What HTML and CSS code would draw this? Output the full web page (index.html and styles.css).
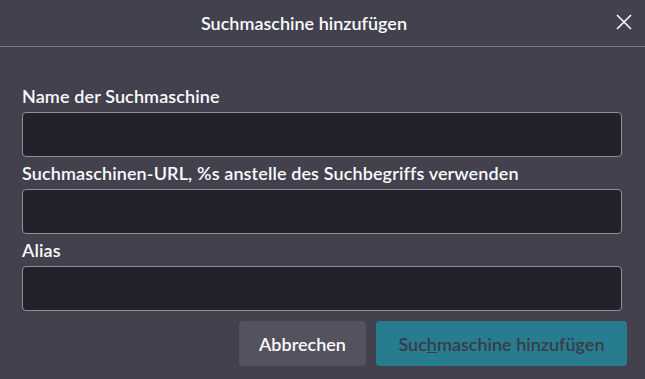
FILE: index.html
```html
<!DOCTYPE html>
<html lang="de">
<head>
    <meta charset="UTF-8">
    <title>Suchmaschine hinzufügen</title>
    <link rel="stylesheet" href="styles.css">
</head>
<body>
    <div class="dialog">
        <div class="dialog-header">
            <h1 class="dialog-title">Suchmaschine hinzufügen</h1>
            <button class="close-btn" aria-label="Schließen">
                <svg width="16" height="16" viewBox="0 0 16 16">
                    <path d="M1 1 L15 15 M15 1 L1 15" stroke="#fbfbfe" stroke-width="1.6" fill="none"/>
                </svg>
            </button>
        </div>

        <form class="dialog-body">
            <label class="field">
                <span class="field-label">Name der Suchmaschine</span>
                <input type="text" class="field-input">
            </label>
            <label class="field">
                <span class="field-label">Suchmaschinen-URL, %s anstelle des Suchbegriffs verwenden</span>
                <input type="text" class="field-input">
            </label>
            <label class="field">
                <span class="field-label">Alias</span>
                <input type="text" class="field-input">
            </label>

            <div class="button-row">
                <button type="button" class="btn btn-secondary">Abbrechen</button>
                <button type="button" class="btn btn-primary" disabled>Suc<u>h</u>maschine hinzufügen</button>
            </div>
        </form>
    </div>
</body>
</html>
```

FILE: styles.css
```css
body {
    margin: 0;
    background-color: #42414d;
    color: #fbfbfe;
    font-family: 'Lato', 'Liberation Sans', sans-serif;
}

.dialog {
    width: 645px;
    height: 379px;
}

.dialog-header {
    height: 46px;
    border-bottom: 1px solid #787783;
    display: flex;
    align-items: center;
}

.dialog-title {
    flex: 1;
    margin: 0;
    text-align: center;
    font-size: 18px;
    font-weight: 600;
}

.close-btn {
    width: 37px;
    height: 46px;
    margin-top: -2px;
    background: none;
    border: none;
    padding: 0 0 0 8px;
    display: flex;
    align-items: center;
    justify-content: flex-start;
    cursor: pointer;
}

.close-btn svg {
    display: block;
}

.dialog-body {
    padding: 37px 23px 0 22px;
    display: flex;
    flex-direction: column;
}

.field {
    display: flex;
    flex-direction: column;
    margin-bottom: 4px;
}

.field-label {
    font-size: 18px;
    font-weight: 600;
    line-height: 24px;
    letter-spacing: 0.12px;
    margin-bottom: 4px;
}

.field-input {
    height: 45px;
    box-sizing: border-box;
    background-color: #23222b;
    border: 1px solid #8f8f9d;
    border-radius: 4px;
    color: #fbfbfe;
    font-family: inherit;
    font-size: 16px;
    padding: 0 8px;
}

.button-row {
    display: flex;
    justify-content: flex-end;
    gap: 10px;
    margin-top: 6px;
    margin-right: -5px;
}

.btn {
    height: 45px;
    border: none;
    border-radius: 4px;
    font-family: inherit;
    font-size: 18px;
    font-weight: 600;
    padding: 0 20px;
}

.btn-secondary {
    width: 127px;
    background-color: #53525e;
    color: #fbfbfe;
}

.btn-primary {
    width: 251px;
    background-color: #277d8f;
    color: #3b3a47;
}
```
